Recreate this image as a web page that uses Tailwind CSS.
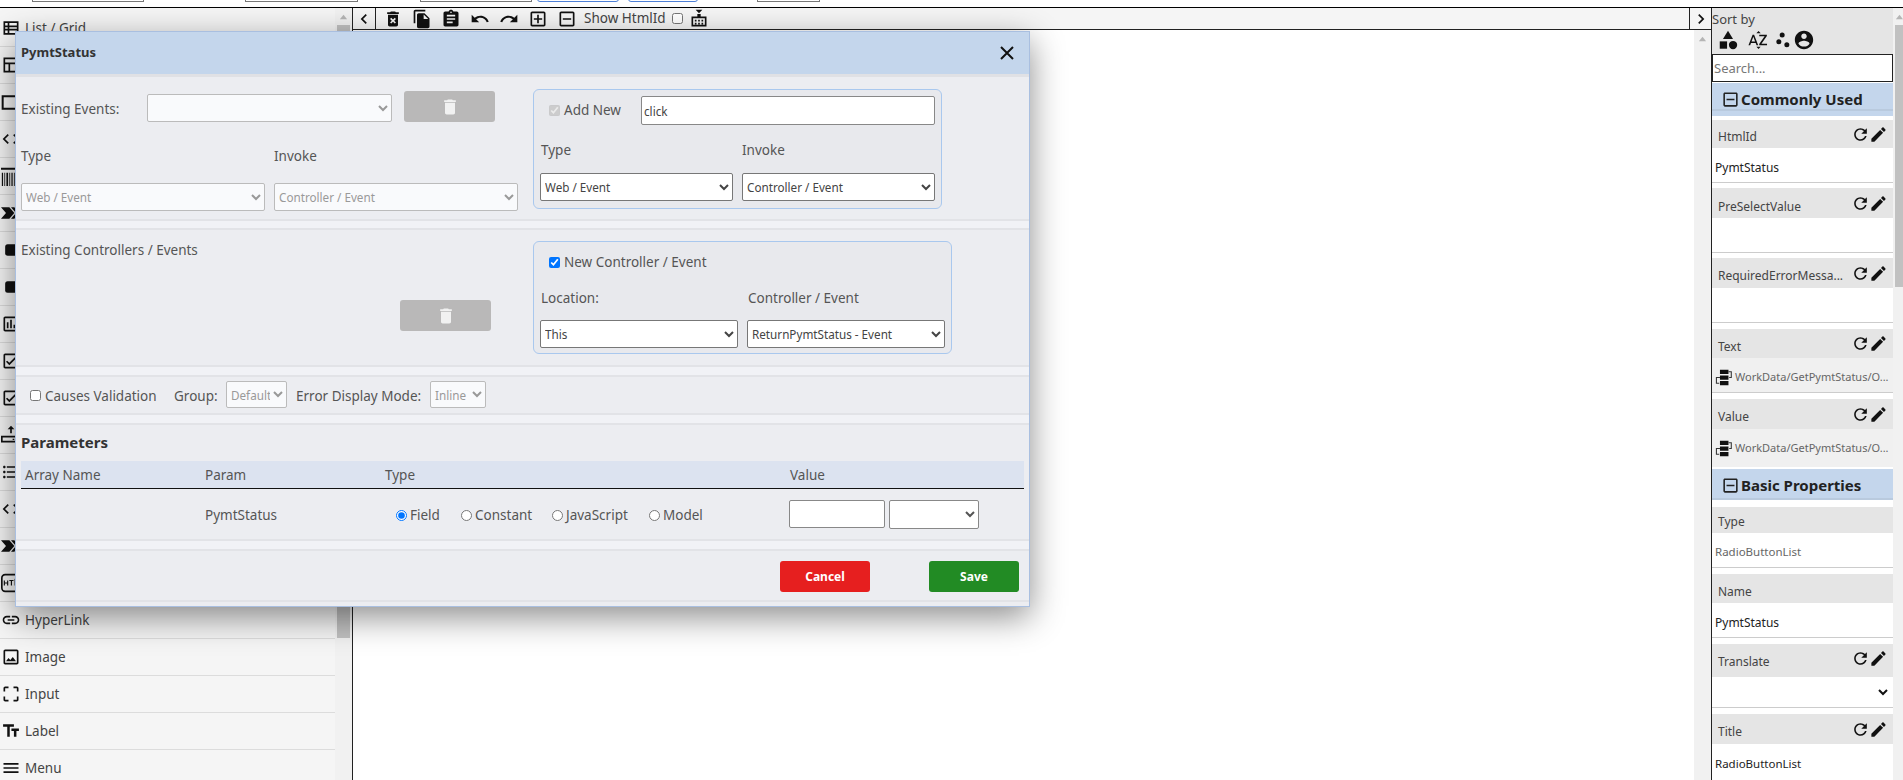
<!doctype html>
<html lang="en">
<head>
<meta charset="utf-8">
<title>PymtStatus</title>
<script src="https://cdn.jsdelivr.net/npm/@tailwindcss/browser@4"></script>
</head>
<body class="bg-white font-['Noto_Sans','Open_Sans',sans-serif] text-[#444]">
<div class="relative w-[1903px] h-[780px] overflow-hidden flex flex-col">
  <!-- top strip -->
  <div class="h-[8px] shrink-0 border-b border-black relative overflow-hidden">
    <div class="absolute left-[32px] top-[-10px] w-[112px] h-[12px] border border-[#777]"></div>
    <div class="absolute left-[245px] top-[-10px] w-[113px] h-[12px] border border-[#777]"></div>
    <div class="absolute left-[420px] top-[-10px] w-[112px] h-[12px] border border-[#777]"></div>
    <div class="absolute left-[537px] top-[-10px] w-[82px] h-[12px] border border-[#4d7fd6] rounded-[3px]"></div>
    <div class="absolute left-[628px] top-[-10px] w-[70px] h-[12px] border border-[#4d7fd6] rounded-[3px]"></div>
    <div class="absolute left-[757px] top-[-10px] w-[63px] h-[12px] border border-[#777]"></div>
  </div>
  <div class="flex flex-1 min-h-0">
    <!-- left sidebar -->
    <aside class="w-[353px] shrink-0 flex border-r border-[#222] bg-[#f5f5f5]">
      <ul class="w-[335px] pt-[2px] text-[13.5px] text-[#444]">
        <li class="h-[37px] flex items-center gap-[4px] pl-[1px] border-b border-[#dcdcdc]"><svg class="size-[20px] shrink-0" viewBox="0 0 24 24" fill="#111"><path d="M3 4h18v16H3z M5 6v3h3V6z M10 6v3h9V6z M5 11v2h3v-2z M10 11v2h9v-2z M5 15v3h3v-3z M10 15v3h9v-3z" fill-rule="evenodd"/></svg>List / Grid</li>
        <li class="h-[37px] flex items-center pl-[1px] border-b border-[#dcdcdc]"><svg class="size-[20px] shrink-0" viewBox="0 0 24 24" fill="#111"><path d="M3 3h18v18H3z M5 5v4h14V5z M5 11v8h4v-8z M11 11v8h8v-8z" fill-rule="evenodd"/></svg></li>
        <li class="h-[37px] flex items-center pl-[1px] border-b border-[#dcdcdc]"><svg class="size-[20px] shrink-0" viewBox="0 0 24 24" fill="none" stroke="#111" stroke-width="2.4"><path d="M2 5h20v15H2z"/></svg></li>
        <li class="h-[37px] flex items-center pl-[1px] border-b border-[#dcdcdc]"><svg class="size-[20px] shrink-0" viewBox="0 0 24 24" fill="#111"><path d="M9.4 16.6L4.8 12l4.6-4.6L8 6l-6 6 6 6 1.4-1.4zm5.2 0l4.6-4.6-4.6-4.6L16 6l6 6-6 6-1.4-1.4z"/></svg></li>
        <li class="h-[37px] flex items-center pl-[1px] border-b border-[#dcdcdc]"><svg class="size-[20px] shrink-0" viewBox="0 0 24 24" fill="#111"><path d="M0 2h24v2.4H0z M1 8h1.5v16H1z M4 8h1v16H4z M6.5 8h2v16h-2z M10 8h1v16h-1z M12.5 8h1.5v16h-1.5z M15.5 8h1v16h-1z"/></svg></li>
        <li class="h-[37px] flex items-center pl-[1px] border-b border-[#dcdcdc]"><svg class="size-[20px] shrink-0" viewBox="0 0 24 24" fill="#111"><path d="M0 5h10l6 7-6 7H0l6-7z M12 5h4l6 7-6 7h-4l6-7z"/></svg></li>
        <li class="h-[37px] flex items-center pl-[1px] border-b border-[#dcdcdc]"><svg class="size-[20px] shrink-0" viewBox="0 0 24 24" fill="#111"><rect x="5" y="5" width="16" height="14" rx="3"/></svg></li>
        <li class="h-[37px] flex items-center pl-[1px] border-b border-[#dcdcdc]"><svg class="size-[20px] shrink-0" viewBox="0 0 24 24" fill="#111"><rect x="5" y="5" width="16" height="14" rx="3"/></svg></li>
        <li class="h-[37px] flex items-center pl-[1px] border-b border-[#dcdcdc]"><svg class="size-[20px] shrink-0" viewBox="0 0 24 24" fill="#111"><path d="M19 3H5c-1.1 0-2 .9-2 2v14c0 1.1.9 2 2 2h14c1.1 0 2-.9 2-2V5c0-1.1-.9-2-2-2zm0 16H5V5h14v14zM7 10h2v7H7zm4-3h2v10h-2zm4 6h2v4h-2z"/></svg></li>
        <li class="h-[37px] flex items-center pl-[1px] border-b border-[#dcdcdc]"><svg class="size-[20px] shrink-0" viewBox="0 0 24 24" fill="#111"><path d="M19 3H5c-1.1 0-2 .9-2 2v14c0 1.1.9 2 2 2h14c1.1 0 2-.9 2-2V5c0-1.1-.9-2-2-2zm0 16H5V5h14v14zM17.99 9l-1.41-1.42-6.59 6.59-2.58-2.57-1.42 1.41 4 3.99z"/></svg></li>
        <li class="h-[37px] flex items-center pl-[1px] border-b border-[#dcdcdc]"><svg class="size-[20px] shrink-0" viewBox="0 0 24 24" fill="#111"><path d="M19 3H5c-1.1 0-2 .9-2 2v14c0 1.1.9 2 2 2h14c1.1 0 2-.9 2-2V5c0-1.1-.9-2-2-2zm0 16H5V5h14v14zM17.99 9l-1.41-1.42-6.59 6.59-2.58-2.57-1.42 1.41 4 3.99z"/></svg></li>
        <li class="h-[37px] flex items-center pl-[1px] border-b border-[#dcdcdc]"><svg class="size-[20px] shrink-0" viewBox="0 0 24 24" fill="#111"><path d="M11 10h2V5h3l-4-4-4 4h3z"/><path d="M0 13h24v8H0z M2 15v4h20v-4z M14 16.5h2v1.5h-2z" fill-rule="evenodd"/></svg></li>
        <li class="h-[37px] flex items-center pl-[1px] border-b border-[#dcdcdc]"><svg class="size-[20px] shrink-0" viewBox="0 0 24 24" fill="#111"><path d="M4 10.5c-.83 0-1.5.67-1.5 1.5s.67 1.5 1.5 1.5 1.5-.67 1.5-1.5-.67-1.5-1.5-1.5zm0-6c-.83 0-1.5.67-1.5 1.5S3.17 7.5 4 7.5 5.5 6.83 5.5 6 4.83 4.5 4 4.5zm0 12c-.83 0-1.5.68-1.5 1.5s.68 1.5 1.5 1.5 1.5-.68 1.5-1.5-.67-1.5-1.5-1.5zM7 19h14v-2H7v2zm0-6h14v-2H7v2zm0-8v2h14V5H7z"/></svg></li>
        <li class="h-[37px] flex items-center pl-[1px] border-b border-[#dcdcdc]"><svg class="size-[20px] shrink-0" viewBox="0 0 24 24" fill="#111"><path d="M9.4 16.6L4.8 12l4.6-4.6L8 6l-6 6 6 6 1.4-1.4zm5.2 0l4.6-4.6-4.6-4.6L16 6l6 6-6 6-1.4-1.4z"/></svg></li>
        <li class="h-[37px] flex items-center pl-[1px] border-b border-[#dcdcdc]"><svg class="size-[20px] shrink-0" viewBox="0 0 24 24" fill="#111"><path d="M0 5h10l6 7-6 7H0l6-7z M12 5h4l6 7-6 7h-4l6-7z"/></svg></li>
        <li class="h-[37px] flex items-center pl-[1px] border-b border-[#dcdcdc]"><svg class="size-[20px] shrink-0" viewBox="0 0 24 24" fill="none" stroke="#111" stroke-width="2"><rect x="1" y="2" width="26" height="20" rx="4"/><path d="M4 9v6M8 9v6M4 12h4M10 9h5M12.5 9v6M17 15V9l2.5 4L22 9v6" stroke-width="1.4"/></svg></li>
        <li class="h-[37px] flex items-center gap-[4px] pl-[1px] border-b border-[#dcdcdc]"><svg class="size-[20px] shrink-0" viewBox="0 0 24 24" fill="#111"><path d="M3.9 12c0-1.71 1.39-3.1 3.1-3.1h4V7H7c-2.76 0-5 2.24-5 5s2.24 5 5 5h4v-1.9H7c-1.71 0-3.1-1.39-3.1-3.1zM8 13h8v-2H8v2zm9-6h-4v1.9h4c1.71 0 3.1 1.39 3.1 3.1s-1.39 3.1-3.1 3.1h-4V17h4c2.76 0 5-2.24 5-5s-2.24-5-5-5z"/></svg>HyperLink</li>
        <li class="h-[37px] flex items-center gap-[4px] pl-[1px] border-b border-[#dcdcdc]"><svg class="size-[20px] shrink-0" viewBox="0 0 24 24" fill="#111"><path d="M19 5v14H5V5h14m0-2H5c-1.1 0-2 .9-2 2v14c0 1.1.9 2 2 2h14c1.1 0 2-.9 2-2V5c0-1.1-.9-2-2-2zM14.14 11.86l-3 3.87L9 13.14 6 17h12l-3.86-5.14z"/></svg>Image</li>
        <li class="h-[37px] flex items-center gap-[4px] pl-[1px] border-b border-[#dcdcdc]"><svg class="size-[20px] shrink-0" viewBox="0 0 24 24" fill="#111"><path d="M3 5v4h2V5h4V3H5c-1.1 0-2 .9-2 2zm2 10H3v4c0 1.1.9 2 2 2h4v-2H5v-4zm14 4h-4v2h4c1.1 0 2-.9 2-2v-4h-2v4zm0-16h-4v2h4v4h2V5c0-1.1-.9-2-2-2z"/></svg>Input</li>
        <li class="h-[37px] flex items-center gap-[4px] pl-[1px] border-b border-[#dcdcdc]"><svg class="size-[20px] shrink-0" viewBox="0 0 24 24" fill="#111"><path d="M2.5 4v3h5v12h3V7h5V4h-13zm19 5h-9v3h3v7h3v-7h3V9z"/></svg>Label</li>
        <li class="h-[37px] flex items-center gap-[4px] pl-[1px] border-b border-[#dcdcdc]"><svg class="size-[20px] shrink-0" viewBox="0 0 24 24" fill="#111"><path d="M3 18h18v-2H3v2zm0-5h18v-2H3v2zm0-7v2h18V6H3z"/></svg>Menu</li>
      </ul>
      <div class="flex-1 bg-[#f1f1f1] px-[2px] flex flex-col items-center">
        <svg class="size-[9px] mt-[5px] shrink-0" viewBox="0 0 10 10" fill="#b5b5b5"><path d="M5 2l4 5H1z"/></svg>
        <div class="w-full h-[613px] mt-[3px] bg-[#c1c1c1]"></div>
      </div>
    </aside>
    <!-- main canvas -->
    <main class="flex-1 min-w-0 flex flex-col">
      <div class="h-[22px] bg-[#f5f5f5] border-b border-[#222] flex items-center text-[13.5px]">
        <div class="w-[23px] h-full flex items-center justify-center border-r border-[#222]"><svg class="size-[20px]" viewBox="0 0 24 24" fill="#111"><path d="M15.41 7.41L14 6l-6 6 6 6 1.41-1.41L10.83 12z"/></svg></div>
        <div class="flex items-center ml-[7px] gap-[9px]">
          <svg class="size-[20px]" viewBox="0 0 24 24" fill="#111"><path d="M6 19c0 1.1.9 2 2 2h8c1.1 0 2-.9 2-2V7H6v12zm2.46-7.12l1.41-1.41L12 12.59l2.12-2.12 1.41 1.41L13.41 14l2.12 2.12-1.41 1.41L12 15.41l-2.12 2.12-1.41-1.41L10.59 14l-2.13-2.12zM15.5 4l-1-1h-5l-1 1H5v2h14V4z"/></svg>
          <svg class="size-[20px]" viewBox="0 0 24 24" fill="#111"><path d="M16 1H4c-1.1 0-2 .9-2 2v14h2V3h12V1zm-1 4l6 6v10c0 1.1-.9 2-2 2H7.99C6.89 23 6 22.1 6 21l.01-14c0-1.1.89-2 1.99-2h7zm-1 7h5.5L14 6.5V12z"/></svg>
          <svg class="size-[20px]" viewBox="0 0 24 24" fill="#111"><path d="M19 3h-4.18C14.4 1.84 13.3 1 12 1c-1.3 0-2.4.84-2.82 2H5c-1.1 0-2 .9-2 2v14c0 1.1.9 2 2 2h14c1.1 0 2-.9 2-2V5c0-1.1-.9-2-2-2zm-7 0c.55 0 1 .45 1 1s-.45 1-1 1-1-.45-1-1 .45-1 1-1zm2 14H7v-2h7v2zm3-4H7v-2h10v2zm0-4H7V7h10v2z"/></svg>
          <svg class="size-[20px]" viewBox="0 0 24 24" fill="#111"><path d="M12.5 8c-2.65 0-5.05.99-6.9 2.6L2 7v9h9l-3.62-3.62c1.39-1.16 3.16-1.88 5.12-1.88 3.54 0 6.55 2.31 7.6 5.5l2.37-.78C21.08 11.03 17.15 8 12.5 8z"/></svg>
          <svg class="size-[20px]" viewBox="0 0 24 24" fill="#111"><path d="M18.4 10.6C16.55 8.99 14.15 8 11.5 8c-4.65 0-8.58 3.03-9.96 7.22L3.9 16c1.05-3.19 4.05-5.5 7.6-5.5 1.95 0 3.73.72 5.12 1.88L13 16h9V7l-3.6 3.6z"/></svg>
          <svg class="size-[20px]" viewBox="0 0 24 24" fill="#111"><path d="M19 3H5c-1.1 0-2 .9-2 2v14c0 1.1.9 2 2 2h14c1.1 0 2-.9 2-2V5c0-1.1-.9-2-2-2zm0 16H5V5h14v14zM11 17h2v-4h4v-2h-4V7h-2v4H7v2h4z"/></svg>
          <svg class="size-[20px]" viewBox="0 0 24 24" fill="#111"><path d="M19 3H5c-1.1 0-2 .9-2 2v14c0 1.1.9 2 2 2h14c1.1 0 2-.9 2-2V5c0-1.1-.9-2-2-2zm0 16H5V5h14v14zM7 11h10v2H7z"/></svg>
        </div>
        <span class="ml-[7px] text-[#444]">Show HtmlId</span>
        <input type="checkbox" class="size-[11px] ml-[6px]">
        <svg class="size-[20px] ml-[6px]" viewBox="0 0 24 24" fill="#111"><path d="M8 1h8l-4 4z M10 6h4v3h7v12H3V9h7z M5 11v8h14v-8z M7 13h2v2H7z M11 13h2v2h-2z M15 13h2v2h-2z M7 16.5h2v2H7z M11 16.5h2v2h-2z M15 16.5h2v2h-2z" fill-rule="evenodd"/></svg>
        <div class="ml-auto flex items-center h-full">
          <div class="w-[22px] h-full flex items-center justify-center border-l border-[#222]"><svg class="size-[20px]" viewBox="0 0 24 24" fill="#111"><path d="M10 6L8.59 7.41 13.17 12l-4.58 4.59L10 18l6-6z"/></svg></div>
        </div>
      </div>
      <div class="flex-1 flex justify-end">
        <div class="w-[17px] bg-[#f1f1f1] flex justify-center"><svg class="size-[9px] mt-[5px]" viewBox="0 0 10 10" fill="#b5b5b5"><path d="M5 2l4 5H1z"/></svg></div>
      </div>
    </main>
    <!-- property panel -->
    <aside class="w-[192px] shrink-0 flex border-l border-[#222] text-[12px]">
      <div class="w-[181px] shrink-0 flex flex-col">
        <div class="h-[46px] bg-[#e5e5e5] pt-[1px]">
          <div class="text-[13px] leading-[20px]">Sort by</div>
          <div class="flex items-center ml-[5px]">
            <svg class="size-[22px]" viewBox="0 0 24 24" fill="#111"><path d="M12 2l-5.5 9h11z"/><circle cx="17.5" cy="17.5" r="4.5"/><path d="M3 13.5h8v8H3z"/></svg>
            <svg class="size-[22px] ml-[8px]" viewBox="0 0 24 24" fill="#111"><path d="M14.94 4.66h-4.72l2.36-2.36zm-4.69 14.71h4.66l-2.33 2.33zM6.1 6.27L1.6 17.73h1.84l.92-2.45h5.11l.92 2.45h1.84L7.74 6.27H6.1zm-1.13 7.37l1.94-5.18 1.94 5.18H4.97zm10.76 2.5h6.12v1.59h-8.53v-1.29l5.92-8.56h-5.88v-1.6h8.3v1.26l-5.93 8.6z"/></svg>
            <svg class="size-[20px] ml-[4px]" viewBox="0 0 24 24" fill="#111"><circle cx="7" cy="14" r="3"/><circle cx="11" cy="6" r="3"/><circle cx="16.6" cy="17.6" r="3"/></svg>
            <svg class="size-[22px]" viewBox="0 0 24 24" fill="#111"><path d="M12 2C6.48 2 2 6.48 2 12s4.48 10 10 10 10-4.48 10-10S17.52 2 12 2zm0 3c1.66 0 3 1.34 3 3s-1.34 3-3 3-3-1.34-3-3 1.34-3 3-3zm0 14.2c-2.5 0-4.71-1.28-6-3.22.03-1.99 4-3.08 6-3.08 1.99 0 5.97 1.09 6 3.08-1.29 1.94-3.5 3.22-6 3.22z"/></svg>
          </div>
        </div>
        <input class="h-[28px] bg-white border border-[#222] text-[13px] px-[1px] placeholder:text-[#777]" placeholder="Search...">
        <div class="mt-[1px] h-[33px] bg-[#c4d6ec]">
          <div class="h-[28px] border-b-2 border-[#b9cade] flex items-center pl-[9px] gap-[1px] pt-[6px] font-bold text-[15px] text-[#222]"><svg class="size-[19px]" viewBox="0 0 24 24" fill="#222"><path d="M19 3H5c-1.1 0-2 .9-2 2v14c0 1.1.9 2 2 2h14c1.1 0 2-.9 2-2V5c0-1.1-.9-2-2-2zm0 16H5V5h14v14zM7 11h10v2H7z"/></svg>Commonly Used</div>
        </div>
        <div class="mt-[4px] h-[28px] bg-[#e5e5e5] flex items-center justify-between pl-[6px] pr-[5px]"><span class="pt-[6px]">HtmlId</span><span class="flex -space-x-[1px]"><svg class="size-[19px]" viewBox="0 0 24 24" fill="#111"><path d="M17.65 6.35C16.2 4.9 14.21 4 12 4c-4.42 0-7.99 3.58-7.99 8s3.57 8 7.99 8c3.73 0 6.84-2.55 7.73-6h-2.08c-.82 2.33-3.04 4-5.65 4-3.31 0-6-2.69-6-6s2.69-6 6-6c1.66 0 3.14.69 4.22 1.78L13 11h7V4l-2.35 2.35z"/></svg><svg class="size-[19px]" viewBox="0 0 24 24" fill="#111"><path d="M3 17.25V21h3.75L17.81 9.94l-3.75-3.75L3 17.25zM20.71 7.04c.39-.39.39-1.02 0-1.41l-2.34-2.34c-.39-.39-1.02-.39-1.41 0l-1.83 1.83 3.75 3.75 1.83-1.83z"/></svg></span></div>
        <div class="h-[35px] pl-[3px] pt-[6px] flex items-center border-b border-[#ccc] text-[#222]">PymtStatus</div>
        <div class="mt-[5px] h-[30px] bg-[#e5e5e5] flex items-center justify-between pl-[6px] pr-[5px]"><span class="pt-[8px]">PreSelectValue</span><span class="flex -space-x-[1px]"><svg class="size-[19px]" viewBox="0 0 24 24" fill="#111"><path d="M17.65 6.35C16.2 4.9 14.21 4 12 4c-4.42 0-7.99 3.58-7.99 8s3.57 8 7.99 8c3.73 0 6.84-2.55 7.73-6h-2.08c-.82 2.33-3.04 4-5.65 4-3.31 0-6-2.69-6-6s2.69-6 6-6c1.66 0 3.14.69 4.22 1.78L13 11h7V4l-2.35 2.35z"/></svg><svg class="size-[19px]" viewBox="0 0 24 24" fill="#111"><path d="M3 17.25V21h3.75L17.81 9.94l-3.75-3.75L3 17.25zM20.71 7.04c.39-.39.39-1.02 0-1.41l-2.34-2.34c-.39-.39-1.02-.39-1.41 0l-1.83 1.83 3.75 3.75 1.83-1.83z"/></svg></span></div>
        <div class="h-[35px] border-b border-[#ccc]"></div>
        <div class="mt-[5px] h-[30px] bg-[#e5e5e5] flex items-center justify-between pl-[6px] pr-[5px]"><span class="pt-[6px]">RequiredErrorMessa...</span><span class="flex -space-x-[1px]"><svg class="size-[19px]" viewBox="0 0 24 24" fill="#111"><path d="M17.65 6.35C16.2 4.9 14.21 4 12 4c-4.42 0-7.99 3.58-7.99 8s3.57 8 7.99 8c3.73 0 6.84-2.55 7.73-6h-2.08c-.82 2.33-3.04 4-5.65 4-3.31 0-6-2.69-6-6s2.69-6 6-6c1.66 0 3.14.69 4.22 1.78L13 11h7V4l-2.35 2.35z"/></svg><svg class="size-[19px]" viewBox="0 0 24 24" fill="#111"><path d="M3 17.25V21h3.75L17.81 9.94l-3.75-3.75L3 17.25zM20.71 7.04c.39-.39.39-1.02 0-1.41l-2.34-2.34c-.39-.39-1.02-.39-1.41 0l-1.83 1.83 3.75 3.75 1.83-1.83z"/></svg></span></div>
        <div class="h-[35px] border-b border-[#ccc]"></div>
        <div class="mt-[6px] h-[29px] bg-[#e5e5e5] flex items-center justify-between pl-[6px] pr-[5px]"><span class="pt-[6px]">Text</span><span class="flex -space-x-[1px]"><svg class="size-[19px]" viewBox="0 0 24 24" fill="#111"><path d="M17.65 6.35C16.2 4.9 14.21 4 12 4c-4.42 0-7.99 3.58-7.99 8s3.57 8 7.99 8c3.73 0 6.84-2.55 7.73-6h-2.08c-.82 2.33-3.04 4-5.65 4-3.31 0-6-2.69-6-6s2.69-6 6-6c1.66 0 3.14.69 4.22 1.78L13 11h7V4l-2.35 2.35z"/></svg><svg class="size-[19px]" viewBox="0 0 24 24" fill="#111"><path d="M3 17.25V21h3.75L17.81 9.94l-3.75-3.75L3 17.25zM20.71 7.04c.39-.39.39-1.02 0-1.41l-2.34-2.34c-.39-.39-1.02-.39-1.41 0l-1.83 1.83 3.75 3.75 1.83-1.83z"/></svg></span></div>
        <div class="h-[35px] bg-[#f0f0f0] border-b border-[#ccc] flex items-center pl-[3px] pt-[4px] gap-[3px] text-[11px] text-[#666] whitespace-nowrap"><svg class="size-[17px] shrink-0" viewBox="0 0 24 24"><path d="M7 1h12v6H7z M7 9h12v6H7z M7 17h12v6H7z" fill="#111"/><path d="M7 12H2v8h4 M19 4h4v8h-3" fill="none" stroke="#333" stroke-width="1.5"/></svg><span>WorkData/GetPymtStatus/O...</span></div>
        <div class="mt-[6px] h-[30px] bg-[#e5e5e5] flex items-center justify-between pl-[6px] pr-[5px]"><span class="pt-[6px]">Value</span><span class="flex -space-x-[1px]"><svg class="size-[19px]" viewBox="0 0 24 24" fill="#111"><path d="M17.65 6.35C16.2 4.9 14.21 4 12 4c-4.42 0-7.99 3.58-7.99 8s3.57 8 7.99 8c3.73 0 6.84-2.55 7.73-6h-2.08c-.82 2.33-3.04 4-5.65 4-3.31 0-6-2.69-6-6s2.69-6 6-6c1.66 0 3.14.69 4.22 1.78L13 11h7V4l-2.35 2.35z"/></svg><svg class="size-[19px]" viewBox="0 0 24 24" fill="#111"><path d="M3 17.25V21h3.75L17.81 9.94l-3.75-3.75L3 17.25zM20.71 7.04c.39-.39.39-1.02 0-1.41l-2.34-2.34c-.39-.39-1.02-.39-1.41 0l-1.83 1.83 3.75 3.75 1.83-1.83z"/></svg></span></div>
        <div class="h-[38px] bg-[#f0f0f0] flex items-center pl-[3px] gap-[3px] text-[11px] text-[#666] whitespace-nowrap"><svg class="size-[17px] shrink-0" viewBox="0 0 24 24"><path d="M7 1h12v6H7z M7 9h12v6H7z M7 17h12v6H7z" fill="#111"/><path d="M7 12H2v8h4 M19 4h4v8h-3" fill="none" stroke="#333" stroke-width="1.5"/></svg><span>WorkData/GetPymtStatus/O...</span></div>
        <div class="mt-[2px] h-[31px] bg-[#c4d6ec] border-b-2 border-[#b9cade] flex items-center pl-[9px] pt-[3px] gap-[1px] font-bold text-[15px] text-[#222]"><svg class="size-[19px]" viewBox="0 0 24 24" fill="#222"><path d="M19 3H5c-1.1 0-2 .9-2 2v14c0 1.1.9 2 2 2h14c1.1 0 2-.9 2-2V5c0-1.1-.9-2-2-2zm0 16H5V5h14v14zM7 11h10v2H7z"/></svg>Basic Properties</div>
        <div class="mt-[7px] h-[26px] bg-[#e5e5e5] flex items-center pl-[6px] pt-[4px]">Type</div>
        <div class="h-[35px] bg-white border-b border-[#ccc] flex items-center pl-[3px] pt-[4px] text-[11.5px] text-[#666]">RadioButtonList</div>
        <div class="mt-[6px] h-[29px] bg-[#e5e5e5] flex items-center pl-[6px] pt-[6px]">Name</div>
        <div class="h-[35px] bg-white border-b border-[#ccc] flex items-center pl-[3px] pt-[6px] text-[#222]">PymtStatus</div>
        <div class="mt-[6px] h-[33px] bg-[#e5e5e5] flex items-center justify-between pl-[6px] pr-[5px]"><span class="pt-[2px]">Translate</span><span class="flex -space-x-[1px] -mt-[4px]"><svg class="size-[19px]" viewBox="0 0 24 24" fill="#111"><path d="M17.65 6.35C16.2 4.9 14.21 4 12 4c-4.42 0-7.99 3.58-7.99 8s3.57 8 7.99 8c3.73 0 6.84-2.55 7.73-6h-2.08c-.82 2.33-3.04 4-5.65 4-3.31 0-6-2.69-6-6s2.69-6 6-6c1.66 0 3.14.69 4.22 1.78L13 11h7V4l-2.35 2.35z"/></svg><svg class="size-[19px]" viewBox="0 0 24 24" fill="#111"><path d="M3 17.25V21h3.75L17.81 9.94l-3.75-3.75L3 17.25zM20.71 7.04c.39-.39.39-1.02 0-1.41l-2.34-2.34c-.39-.39-1.02-.39-1.41 0l-1.83 1.83 3.75 3.75 1.83-1.83z"/></svg></span></div>
        <div class="h-[31px] bg-white border-b border-[#ccc] flex items-center justify-end pr-[4px]"><svg class="size-[12px]" viewBox="0 0 12 12" fill="none" stroke="#111" stroke-width="2"><path d="M2 4l4 4 4-4"/></svg></div>
        <div class="mt-[6px] h-[30px] bg-[#e5e5e5] flex items-center justify-between pl-[6px] pr-[5px]"><span class="pt-[5px]">Title</span><span class="flex -space-x-[1px]"><svg class="size-[19px]" viewBox="0 0 24 24" fill="#111"><path d="M17.65 6.35C16.2 4.9 14.21 4 12 4c-4.42 0-7.99 3.58-7.99 8s3.57 8 7.99 8c3.73 0 6.84-2.55 7.73-6h-2.08c-.82 2.33-3.04 4-5.65 4-3.31 0-6-2.69-6-6s2.69-6 6-6c1.66 0 3.14.69 4.22 1.78L13 11h7V4l-2.35 2.35z"/></svg><svg class="size-[19px]" viewBox="0 0 24 24" fill="#111"><path d="M3 17.25V21h3.75L17.81 9.94l-3.75-3.75L3 17.25zM20.71 7.04c.39-.39.39-1.02 0-1.41l-2.34-2.34c-.39-.39-1.02-.39-1.41 0l-1.83 1.83 3.75 3.75 1.83-1.83z"/></svg></span></div>
        <div class="h-[36px] bg-white flex items-center pl-[3px] pt-[4px] text-[11.5px] text-[#222]">RadioButtonList</div>
      </div>
      <div class="flex-1 bg-[#f1f1f1] flex flex-col items-center pl-[2px]">
        <svg class="size-[9px] mt-[5px] shrink-0" viewBox="0 0 10 10" fill="#b5b5b5"><path d="M5 2l4 5H1z"/></svg>
        <div class="w-full h-[262px] mt-[3px] bg-[#c1c1c1]"></div>
      </div>
    </aside>
  </div>

  <!-- modal dialog -->
  <div class="absolute left-[15px] top-[31px] w-[1015px] h-[576px] bg-[#ecedf1] border border-[#a9bfe0] shadow-[0_10px_32px_rgba(0,0,0,0.45)] flex flex-col text-[13.5px] text-[#555]">
    <div class="h-[42px] shrink-0 bg-[#c4d6ec] flex items-center justify-between pl-[5px] pr-[14px]">
      <span class="font-bold text-[13px] text-[#333]">PymtStatus</span>
      <svg class="size-[16px]" viewBox="0 0 24 24" fill="none" stroke="#111" stroke-width="3"><path d="M3 3l18 18M21 3L3 21"/></svg>
    </div>
    <div class="h-[147px] shrink-0 border-t-[3px] border-t-[#e0e1e5] border-b-2 border-b-[#e2e3e7] flex justify-between">
      <div class="w-[505px] pl-[5px] pt-[17px]">
        <div class="flex items-center">
          <span class="w-[126px] pt-[3px]">Existing Events:</span>
          <select disabled class="w-[245px] h-[28px] bg-[#f9fafc] border border-[#bbb] rounded-[2px] text-[11.7px] text-[#999]"><option></option></select>
          <button disabled class="ml-[12px] w-[91px] h-[31px] rounded-[3px] bg-[#b9b8b8] flex items-center justify-center -mt-[3px]"><svg class="size-[20px]" viewBox="0 0 24 24" fill="#f1f1f1"><path d="M6 19c0 1.1.9 2 2 2h8c1.1 0 2-.9 2-2V7H6v12zM19 4h-3.5l-1-1h-5l-1 1H5v2h14V4z"/></svg></button>
        </div>
        <div class="flex mt-[25px] leading-[18px]"><span class="w-[253px]">Type</span><span>Invoke</span></div>
        <div class="flex gap-[9px] mt-[18px]">
          <select disabled class="w-[244px] h-[28px] bg-[#f9fafc] border border-[#bbb] rounded-[2px] text-[11.7px] text-[#999]"><option>Web / Event</option></select>
          <select disabled class="w-[244px] h-[28px] bg-[#f9fafc] border border-[#bbb] rounded-[2px] text-[11.7px] text-[#999]"><option>Controller / Event</option></select>
        </div>
      </div>
      <div class="w-[496px] pt-[12px]">
        <div class="w-[409px] h-[120px] bg-[#e8e9ed] border border-[#a9c8ee] rounded-[6px] pt-[6px] px-[6px]">
          <div class="flex items-center h-[29px]">
            <input type="checkbox" checked disabled class="size-[11px] ml-[9px]">
            <span class="ml-[4px] w-[77px]">Add New</span>
            <input value="click" class="w-[294px] h-[29px] bg-white border border-[#888] rounded-[2px] text-[11.7px] pl-[2px] text-[#444]">
          </div>
          <div class="flex mt-[16px] leading-[18px] pl-[1px]"><span class="w-[201px]">Type</span><span>Invoke</span></div>
          <div class="flex gap-[9px] mt-[14px]">
            <select class="w-[193px] h-[28px] bg-white border border-[#777] rounded-[2px] text-[11.7px] text-[#444]"><option>Web / Event</option></select>
            <select class="w-[193px] h-[28px] bg-white border border-[#777] rounded-[2px] text-[11.7px] text-[#444]"><option>Controller / Event</option></select>
          </div>
        </div>
      </div>
    </div>
    <div class="h-[7px] shrink-0 bg-[#f1f2f6]"></div>
    <div class="h-[139px] shrink-0 border-t-2 border-t-[#e2e3e7] border-b-2 border-b-[#e2e3e7] flex justify-between">
      <div class="w-[505px] pl-[5px] pt-[11px] flex flex-col">
        <span class="leading-[18px]">Existing Controllers / Events</span>
        <button disabled class="ml-[379px] mt-[41px] w-[91px] h-[31px] rounded-[3px] bg-[#b9b8b8] flex items-center justify-center"><svg class="size-[20px]" viewBox="0 0 24 24" fill="#f1f1f1"><path d="M6 19c0 1.1.9 2 2 2h8c1.1 0 2-.9 2-2V7H6v12zM19 4h-3.5l-1-1h-5l-1 1H5v2h14V4z"/></svg></button>
      </div>
      <div class="w-[496px] pt-[11px]">
        <div class="w-[419px] h-[113px] bg-[#e8e9ed] border border-[#a9c8ee] rounded-[6px] pt-[11px] px-[6px]">
          <div class="flex items-center h-[18px]">
            <input type="checkbox" checked class="size-[11px] ml-[9px]">
            <span class="ml-[4px]">New Controller / Event</span>
          </div>
          <div class="flex mt-[18px] leading-[18px] pl-[1px]"><span class="w-[207px]">Location:</span><span>Controller / Event</span></div>
          <div class="flex gap-[9px] mt-[13px]">
            <select class="w-[198px] h-[28px] bg-white border border-[#777] rounded-[2px] text-[11.7px] text-[#444]"><option>This</option></select>
            <select class="w-[198px] h-[28px] bg-white border border-[#777] rounded-[2px] text-[11.7px] text-[#444]"><option>ReturnPymtStatus - Event</option></select>
          </div>
        </div>
      </div>
    </div>
    <div class="h-[8px] shrink-0 bg-[#f1f2f6]"></div>
    <div class="h-[40px] shrink-0 border-t-2 border-t-[#e2e3e7] border-b-2 border-b-[#e2e3e7] flex items-center pl-[14px]">
      <input type="checkbox" class="size-[11px] mt-[1px]">
      <span class="ml-[4px] w-[129px] pt-[2px]">Causes Validation</span>
      <span class="w-[52px] pt-[2px]">Group:</span>
      <select disabled class="w-[61px] h-[27px] bg-[#f9fafc] border border-[#bbb] rounded-[2px] text-[11.7px] text-[#999] -mt-[1px]"><option>Default</option></select>
      <span class="ml-[9px] w-[134px] pt-[2px]">Error Display Mode:</span>
      <select disabled class="w-[56px] h-[27px] bg-[#f9fafc] border border-[#bbb] rounded-[2px] text-[11.7px] text-[#999] -mt-[1px]"><option>Inline</option></select>
    </div>
    <div class="h-[8px] shrink-0 bg-[#f1f2f6]"></div>
    <div class="h-[118px] shrink-0 border-t-2 border-t-[#e2e3e7] border-b-2 border-b-[#e2e3e7] pl-[5px] pr-[5px]">
      <h2 class="font-bold text-[15px] text-[#333] leading-[20px] mt-[7px]">Parameters</h2>
      <div class="mt-[9px] h-[28px] bg-[#dce3f0] border-b-[1.5px] border-[#111] flex items-center pl-[4px] pt-[2px]">
        <span class="w-[180px]">Array Name</span><span class="w-[180px]">Param</span><span class="w-[405px]">Type</span><span>Value</span>
      </div>
      <div class="flex items-center h-[50px] pl-[184px]">
        <span class="w-[180px] pt-[2px]">PymtStatus</span>
        <label class="flex items-center ml-[11px] w-[65px] gap-[3px] pt-[2px]"><input type="radio" name="pt" checked class="size-[11px]">Field</label>
        <label class="flex items-center w-[91px] gap-[3px] pt-[2px]"><input type="radio" name="pt" class="size-[11px]">Constant</label>
        <label class="flex items-center w-[97px] gap-[3px] pt-[2px]"><input type="radio" name="pt" class="size-[11px]">JavaScript</label>
        <label class="flex items-center w-[140px] gap-[3px] pt-[2px]"><input type="radio" name="pt" class="size-[11px]">Model</label>
        <input class="w-[96px] h-[28px] bg-white border border-[#888] rounded-[2px] -mt-[1px]">
        <select class="ml-[4px] w-[90px] h-[29px] bg-white border border-[#888] rounded-[2px]"><option></option></select>
      </div>
    </div>
    <div class="h-[8px] shrink-0 bg-[#f1f2f6]"></div>
    <div class="h-[53px] shrink-0 border-t-2 border-t-[#e2e3e7] border-b-2 border-b-[#e2e3e7] flex justify-end items-center gap-[59px] pr-[10px] pt-[2px]">
      <button class="w-[90px] h-[31px] rounded-[3px] bg-[#e61f1f] text-white font-bold text-[12px]">Cancel</button>
      <button class="w-[90px] h-[31px] rounded-[3px] bg-[#228b24] text-white font-bold text-[12px]">Save</button>
    </div>
  </div>
</div>
</body>
</html>
